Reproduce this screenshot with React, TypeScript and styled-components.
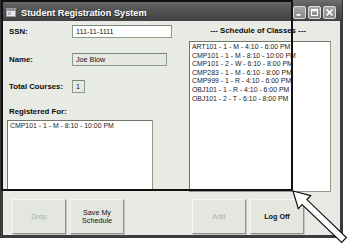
import React from "react";
import styled, { createGlobalStyle } from "styled-components";

const Global = createGlobalStyle`
  html, body { margin: 0; padding: 0; background: #ffffff; }
  body { width: 348px; height: 245px; overflow: hidden; font-family: "Liberation Sans", Arial, sans-serif; }
`;

const Stage = styled.div`
  position: relative;
  width: 348px;
  height: 245px;
  background: #ffffff;
`;

const Window = styled.div`
  width: 343px;
  height: 238px;
  display: flex;
  flex-direction: column;
`;

const TitleBar = styled.div`
  height: 21px;
  box-sizing: border-box;
  padding: 4px 6px 0 5px;
  display: flex;
  align-items: center;
  background: linear-gradient(#6e6e6e 0%, #5a5a5a 30%, #4c4c4c 70%, #404040 100%);
  border-left: 1px solid #2f2f2f;
  border-right: 1px solid #2f2f2f;
`;

const TitleText = styled.span`
  margin-left: 5px;
  color: #ffffff;
  font-weight: bold;
  font-size: 9.2px;
  text-shadow: 1px 1px 0 #2a2a2a;
`;

const TitleButtons = styled.div`
  margin-left: auto;
  display: flex;
  gap: 2px;
`;

const CaptionButton = styled.div`
  width: 13px;
  height: 13px;
  box-sizing: border-box;
  border: 1px solid #dcdcdc;
  border-radius: 2px;
  background: linear-gradient(#a8a8a8, #858585);
  display: flex;
  align-items: center;
  justify-content: center;
`;

const Frame = styled.div`
  flex: 1;
  display: flex;
  flex-direction: column;
  background: #e8eae4;
  border-left: 3px solid #3c3c3c;
  border-right: 3px solid #3c3c3c;
  border-bottom: 3px solid #3c3c3c;
`;

const Top = styled.div`
  display: flex;
  height: 173px;
`;

const LeftColumn = styled.div`
  width: 165px;
  margin-left: 4px;
  padding-top: 4px;
  display: flex;
  flex-direction: column;
`;

const FieldRow = styled.div<{ $gap: number }>`
  display: flex;
  align-items: center;
  height: 13px;
  margin-bottom: ${(p) => p.$gap}px;
`;

const Label = styled.span`
  width: 63px;
  padding-left: 2px;
  font-weight: bold;
  font-size: 7.8px;
  color: #0c0c0c;
  white-space: nowrap;
`;

const TextBox = styled.div<{ $w: number; $readonly?: boolean }>`
  width: ${(p) => p.$w}px;
  height: 13px;
  box-sizing: border-box;
  border: 1px solid #8f9a8c;
  border-top-color: #7d8779;
  background: ${(p) => (p.$readonly ? "#e6e8e2" : "#ffffff")};
  font-size: 7.2px;
  line-height: 11px;
  padding-left: 3px;
  color: #111;
  white-space: nowrap;
`;

const SectionLabel = styled.div`
  margin-top: 14px;
  padding-left: 2px;
  font-weight: bold;
  font-size: 7.8px;
  color: #0c0c0c;
`;

const ListBox = styled.div<{ $w: number; $h: number; $mt?: number }>`
  width: ${(p) => p.$w}px;
  height: ${(p) => p.$h}px;
  margin-top: ${(p) => p.$mt ?? 0}px;
  box-sizing: border-box;
  border: 1px solid #8f9a8c;
  border-top-color: #6f786b;
  border-left-color: #6f786b;
  background: #ffffff;
  padding: 1px 0 0 2px;
  font-size: 6.9px;
  line-height: 8.6px;
  color: #1a1a1a;
  white-space: nowrap;
  overflow: hidden;
`;

const RightColumn = styled.div`
  width: 142px;
  margin-left: 17px;
  padding-top: 5px;
  display: flex;
  flex-direction: column;
`;

const Heading = styled.div`
  text-align: center;
  font-weight: bold;
  font-size: 7.8px;
  color: #0c0c0c;
  height: 10px;
  line-height: 10px;
  margin-bottom: 5px;
  padding-right: 4px;
  white-space: nowrap;
`;

const ButtonRow = styled.div`
  display: flex;
  padding: 5px 0 0 9px;
`;

const Button = styled.div<{ $disabled?: boolean; $bold?: boolean; $ml?: number }>`
  width: 54px;
  height: 35px;
  box-sizing: border-box;
  margin-left: ${(p) => p.$ml ?? 0}px;
  display: flex;
  align-items: center;
  justify-content: center;
  text-align: center;
  font-size: 7.2px;
  line-height: 8px;
  font-weight: ${(p) => (p.$bold ? "bold" : "normal")};
  color: ${(p) => (p.$disabled ? "#a9aea6" : "#111")};
  background: #e4e6e0;
  border: 1px solid #f6f7f4;
  border-right-color: #8e958b;
  border-bottom-color: #8e958b;
  box-shadow: 1px 1px 0 #c2c7bf;
`;

const Annotation = styled.div`
  position: absolute;
  left: 1px;
  top: 0;
  width: 292px;
  height: 191px;
  box-sizing: border-box;
  border: 2px solid #111;
  pointer-events: none;
`;

const ArrowSvg = styled.svg`
  position: absolute;
  left: 0;
  top: 0;
`;

const schedule = [
  "ART101 - 1 - M - 4:10 - 6:00 PM",
  "CMP101 - 1 - M - 8:10 - 10:00 PM",
  "CMP101 - 2 - W - 6:10 - 8:00 PM",
  "CMP283 - 1 - M - 6:10 - 8:00 PM",
  "CMP999 - 1 - R - 4:10 - 6:00 PM",
  "OBJ101 - 1 - R - 4:10 - 6:00 PM",
  "OBJ101 - 2 - T - 6:10 - 8:00 PM",
];

export default function App() {
  return (
    <Stage>
      <Global />
      <Window>
        <TitleBar>
          <svg width="10" height="9" viewBox="0 0 10 9">
            <rect x="0.5" y="0.5" width="9" height="8" fill="#e8e8e8" stroke="#9a9a9a" />
            <rect x="1" y="1" width="8" height="2" fill="#8a8fa0" />
            <rect x="2" y="4" width="3" height="3" fill="#b0b4c0" />
          </svg>
          <TitleText>Student Registration System</TitleText>
          <TitleButtons>
            <CaptionButton>
              <svg width="9" height="9" viewBox="0 0 9 9">
                <rect x="1.5" y="6" width="4" height="1.8" fill="#fff" />
              </svg>
            </CaptionButton>
            <CaptionButton>
              <svg width="9" height="9" viewBox="0 0 9 9">
                <rect x="1.5" y="1.5" width="6" height="6" fill="none" stroke="#fff" strokeWidth="1" />
                <rect x="1.5" y="1.5" width="6" height="1.8" fill="#fff" />
              </svg>
            </CaptionButton>
            <CaptionButton>
              <svg width="9" height="9" viewBox="0 0 9 9">
                <path d="M1.5 1.5 L7.5 7.5 M7.5 1.5 L1.5 7.5" stroke="#fff" strokeWidth="1.6" />
              </svg>
            </CaptionButton>
          </TitleButtons>
        </TitleBar>
        <Frame>
          <Top>
            <LeftColumn>
              <FieldRow $gap={15}>
                <Label>SSN:</Label>
                <TextBox $w={100}>111-11-1111</TextBox>
              </FieldRow>
              <FieldRow $gap={14}>
                <Label>Name:</Label>
                <TextBox $w={95} $readonly>Joe Blow</TextBox>
              </FieldRow>
              <FieldRow $gap={0}>
                <Label>Total Courses:</Label>
                <TextBox $w={13} $readonly>1</TextBox>
              </FieldRow>
              <SectionLabel>Registered For:</SectionLabel>
              <ListBox $w={146} $h={71} $mt={4}>
                CMP101 - 1 - M - 8:10 - 10:00 PM
              </ListBox>
            </LeftColumn>
            <RightColumn>
              <Heading>--- Schedule of Classes ---</Heading>
              <ListBox $w={142} $h={151}>
                {schedule.map((s, i) => (
                  <div key={i}>{s}</div>
                ))}
              </ListBox>
            </RightColumn>
          </Top>
          <ButtonRow>
            <Button $disabled>Drop</Button>
            <Button $ml={4}>
              Save My
              <br />
              Schedule
            </Button>
            <Button $disabled $ml={68}>Add</Button>
            <Button $ml={4} $bold>Log Off</Button>
          </ButtonRow>
        </Frame>
      </Window>
      <Annotation />
      <ArrowSvg width="348" height="245" viewBox="0 0 348 245">
        <polygon
          points="293,191 310.7,195.6 306.9,199.6 346.4,237.5 341.6,242.5 302.1,204.6 298.3,208.6"
          fill="#ffffff"
          stroke="#111"
          strokeWidth="1.2"
          strokeLinejoin="miter"
        />
      </ArrowSvg>
    </Stage>
  );
}
